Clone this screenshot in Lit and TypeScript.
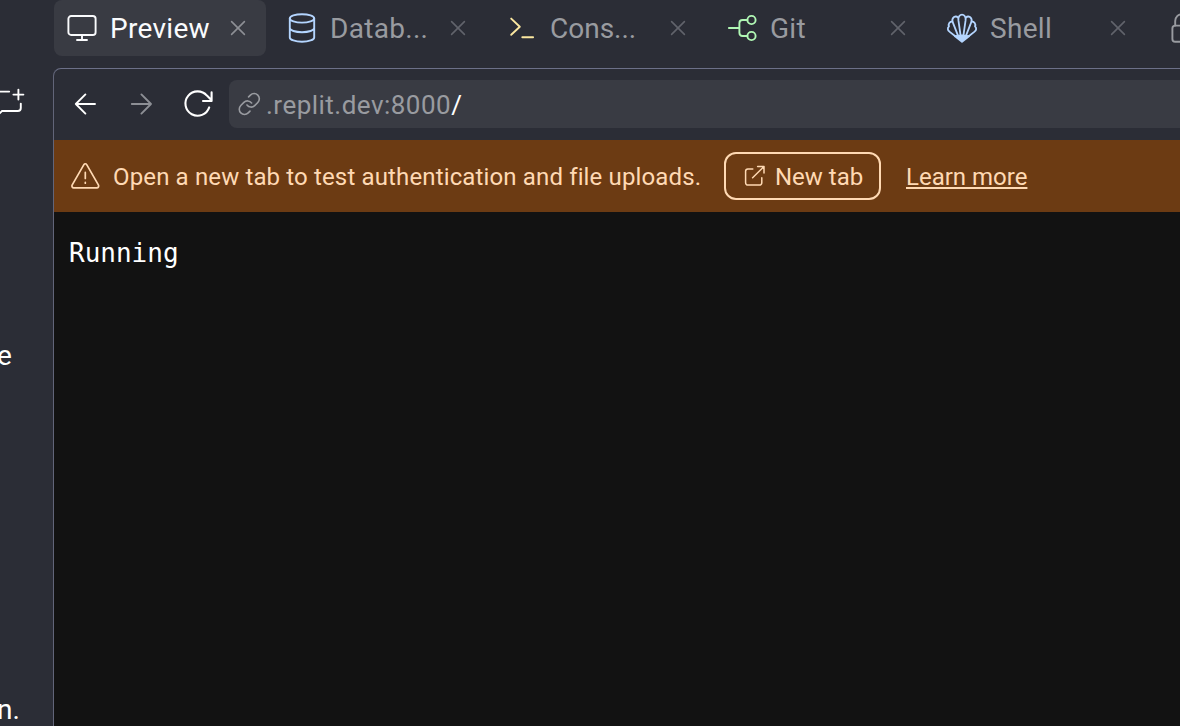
import { LitElement, html, css, svg } from "lit";
import { customElement } from "lit/decorators.js";
import { classMap } from "lit/directives/class-map.js";

const icon = (name: string, size: number, body: unknown) => html`
  <svg class="icon ${name}" width=${size} height=${size} viewBox="0 0 ${size} ${size}" aria-hidden="true">${body}</svg>`;

const monitor = svg`<rect x="2.4" y="4" width="27.2" height="19" rx="2.8"/><path d="M16 23v5M11 28h10"/>`;
const database = svg`<ellipse cx="16" cy="6.4" rx="12.2" ry="4.2"/><path d="M3.8 6.4v19c0 2.4 5.4 4.3 12.2 4.3s12.2-1.900 12.2-4.300v-19M3.8 16c0 2.400 5.400 4.200 12.200 4.200s12.200-1.800 12.200-4.200"/>`;
const consoleGlyph = svg`<path d="M5.2 6.600 13.8 14.800 5.2 22.800M16.300 25.300h10.800"/>`;
const git = svg`<path d="M2.900 16h10.400M21.400 8h-4.800q-3.200 0-3.200 3.200v9.600q0 3.200 3.200 3.200h4.800"/><circle cx="25.500" cy="8" r="4.100"/><circle cx="25.500" cy="24" r="4.100"/>`;
const shell = svg`
  <path d="M14.800 25 12.400 8.200C11.600.8 20.400.8 19.600 8.200L17.200 25"/>
  <path d="M12.200 5.600C9.400 3 5.800 5.600 6.400 9.400L12.400 24.600M19.800 5.600c2.800-2.600 6.400 0 5.800 3.800L19.600 24.600"/>
  <path d="M6.400 9.400C3.600 9.600 2 12 3 14.400 1.200 16 1.600 18.400 3.400 19.600L9 24M25.600 9.400c2.800.2 4.400 2.600 3.400 5 1.800 1.600 1.400 4-.4 5.200L23 24"/>
  <path class="solid" d="M9 24.200 16 23.400l7 .8-7 5.600Z"/>`;
const lock = svg`<rect x="6.400" y="13.600" width="20" height="16.200" rx="2.800"/><path d="M9.200 13.600V9a6.800 6.800 0 0 1 13.600 0v4.600"/>`;
const cross = svg`<path d="M5.600 5.600 18.400 18.400M18.400 5.600 5.600 18.400"/>`;
const arrowLeft = svg`<path d="M25 16H5.800M15.400 6.400 5.800 16l9.600 9.600"/>`;
const arrowRight = svg`<path d="M5.800 16H25M15.400 6.400 25 16l-9.600 9.600"/>`;
const refresh = svg`<path d="M27.200 19.400A12.200 12.200 0 1 1 24.900 7.600L29.600 12.200M29.600 4.400v8.600h-8.600"/>`;
const link = svg`<path d="M10 13a5.100 5.100 0 0 0 7.700.6l3.100-3.100a5.200 5.200 0 0 0-7.400-7.400l-1.800 1.800M14.600 11a5.100 5.100 0 0 0-7.700-.6l-3.100 3.100a5.200 5.200 0 0 0 7.400 7.400l1.800-1.800"/>`;
const warning = svg`<path d="M14.900 4.600 3.100 25.200a1.800 1.800 0 0 0 1.600 2.600h23.200a1.800 1.800 0 0 0 1.600-2.600L17.700 4.600a1.600 1.600 0 0 0-2.800 0ZM16.300 12.400v6M16.300 22.400v.8"/>`;
const external = svg`<path d="M10.800 4.900H5.900a2.300 2.300 0 0 0-2.300 2.300v11.600a2.300 2.300 0 0 0 2.300 2.300h11.600a2.300 2.300 0 0 0 2.300-2.300v-5M10.600 13.800 21.800 2.700M15.600 2.500h6.400v6.400"/>`;
const newChat = svg`<path d="M0 11.600h9.200M20.800 23.600v4.400q0 3-3 3H2l-4 4M18.400 9.600v10M13.400 14.600h10"/>`;

interface Tab { kind: string; label: string; glyph: unknown; active?: boolean; }

const tabs: Tab[] = [
  { kind: "preview", label: "Preview", glyph: monitor, active: true },
  { kind: "database", label: "Datab...", glyph: database },
  { kind: "console", label: "Cons...", glyph: consoleGlyph },
  { kind: "git", label: "Git", glyph: git },
  { kind: "shell", label: "Shell", glyph: shell },
  { kind: "lock", label: "", glyph: lock },
];

@customElement("app-root")
export class AppRoot extends LitElement {
  static styles = css`
    :host { display: flex; width: 100vw; height: 100vh; overflow: hidden; background: #2b2d36; color: #fff; font-family: Roboto, "Liberation Sans", sans-serif; }
    .icon { display: block; flex: none; overflow: visible; fill: none; stroke: currentColor; stroke-width: 1.9; stroke-linecap: round; stroke-linejoin: round; }
    .solid { fill: currentColor; }
    .side { width: 53px; flex: none; box-sizing: border-box; padding-top: 80px; display: flex; flex-direction: column; overflow: hidden; font-size: 28px; line-height: 40px; }
    .line { margin-top: 216px; margin-left: -3px; }
    .line.last { margin-top: 314px; }
    .main { flex: 1; min-width: 0; display: flex; flex-direction: column; overflow: hidden; }
    .tabs { display: flex; gap: 8px; margin-left: 1px; flex: none; }
    .tab { width: 212px; height: 56px; flex: none; box-sizing: border-box; padding: 0 16px 0 12px; display: flex; align-items: center; gap: 12px; border-radius: 8px; color: #999ba0; font-size: 28px; }
    .tab.active { background: #393b43; color: #fafbfd; }
    .label { flex: 1; white-space: nowrap; line-height: 40px; padding-top: 2px; letter-spacing: .3px; }
    .console-label { letter-spacing: 0; }
    .database { color: #b4d5ff; }
    .console { color: #fbe7a0; }
    .git { color: #b0f7b4; }
    .shell { color: #b4d5ff; stroke-width: 1.8; }
    .close { color: #61636b; stroke-width: 1.6; }
    .active .close { color: #8d8f95; }
    .frame { flex: 1; min-height: 0; margin-top: 12px; border-left: 1px solid #626579; border-top: 1px solid #6c7088; border-top-left-radius: 8px; overflow: hidden; display: flex; flex-direction: column; }
    .bar { height: 71px; flex: none; display: flex; align-items: center; padding: 0 0 1px 16px; box-sizing: border-box; }
    .bar > .icon { margin-right: 24px; }
    .bar > .refresh { margin-right: 15px; stroke-width: 2.1; }
    .fwd { color: #8d8f95; }
    .address { flex: 1; height: 48px; border-radius: 8px 0 0 8px; background: #393b43; display: flex; align-items: center; padding-left: 8px; font-size: 26px; color: #999ba0; gap: 5px; }
    .address .icon { stroke-width: 1.6; }
    .url { letter-spacing: .48px; white-space: nowrap; line-height: 36px; padding-top: 1px; }
    .path { color: #fff; }
    .banner { height: 72px; flex: none; background: #6c3b13; color: #ffd9b3; display: flex; align-items: center; padding-left: 15px; font-size: 24px; line-height: 32px; white-space: nowrap; }
    .banner .warning { stroke-width: 1.7; }
    .msg { width: 611px; margin-left: 12px; padding-top: 2px; letter-spacing: .14px; }
    .button { width: 157px; height: 48px; box-sizing: border-box; border: 2px solid #ffd9b3; border-radius: 12px; display: flex; align-items: center; padding-left: 16px; gap: 9px; }
    .button .icon { stroke-width: 1.5; }
    .new { padding-top: 2px; }
    .learn { margin-left: 25px; padding-top: 2px; text-decoration: underline; text-decoration-thickness: 2px; text-underline-offset: 2px; text-decoration-skip-ink: none; }
    .page { flex: 1; background: #121212; padding: 23px 0 0 15px; font: 26px/36px "DejaVu Sans Mono", monospace; }
  `;

  render() {
    return html`
      <aside class="side">
        ${icon("chat", 40, newChat)}
        <div class="line">e</div>
        <div class="line last">n.</div>
      </aside>
      <main class="main">
        <nav class="tabs">
          ${tabs.map((t) => html`
            <div class=${classMap({ tab: true, active: !!t.active })}>
              ${icon(t.kind, 32, t.glyph)}
              ${t.label ? html`
              <span class="label ${t.kind}-label">${t.label}</span>
              ${icon("close", 24, cross)}` : ""}
            </div>`)}
        </nav>
        <section class="frame">
          <div class="bar">
            ${icon("back", 32, arrowLeft)}
            ${icon("fwd", 32, arrowRight)}
            ${icon("refresh", 32, refresh)}
            <div class="address">
              ${icon("link", 24, link)}
              <span class="url">.replit.dev:8000<span class="path">/</span></span>
            </div>
          </div>
          <div class="banner">
            ${icon("warning", 32, warning)}
            <span class="msg">Open a new tab to test authentication and file uploads.</span>
            <div class="button">${icon("external", 24, external)}<span class="new">New tab</span></div>
            <a class="learn">Learn more</a>
          </div>
          <div class="page">Running</div>
        </section>
      </main>`;
  }
}
